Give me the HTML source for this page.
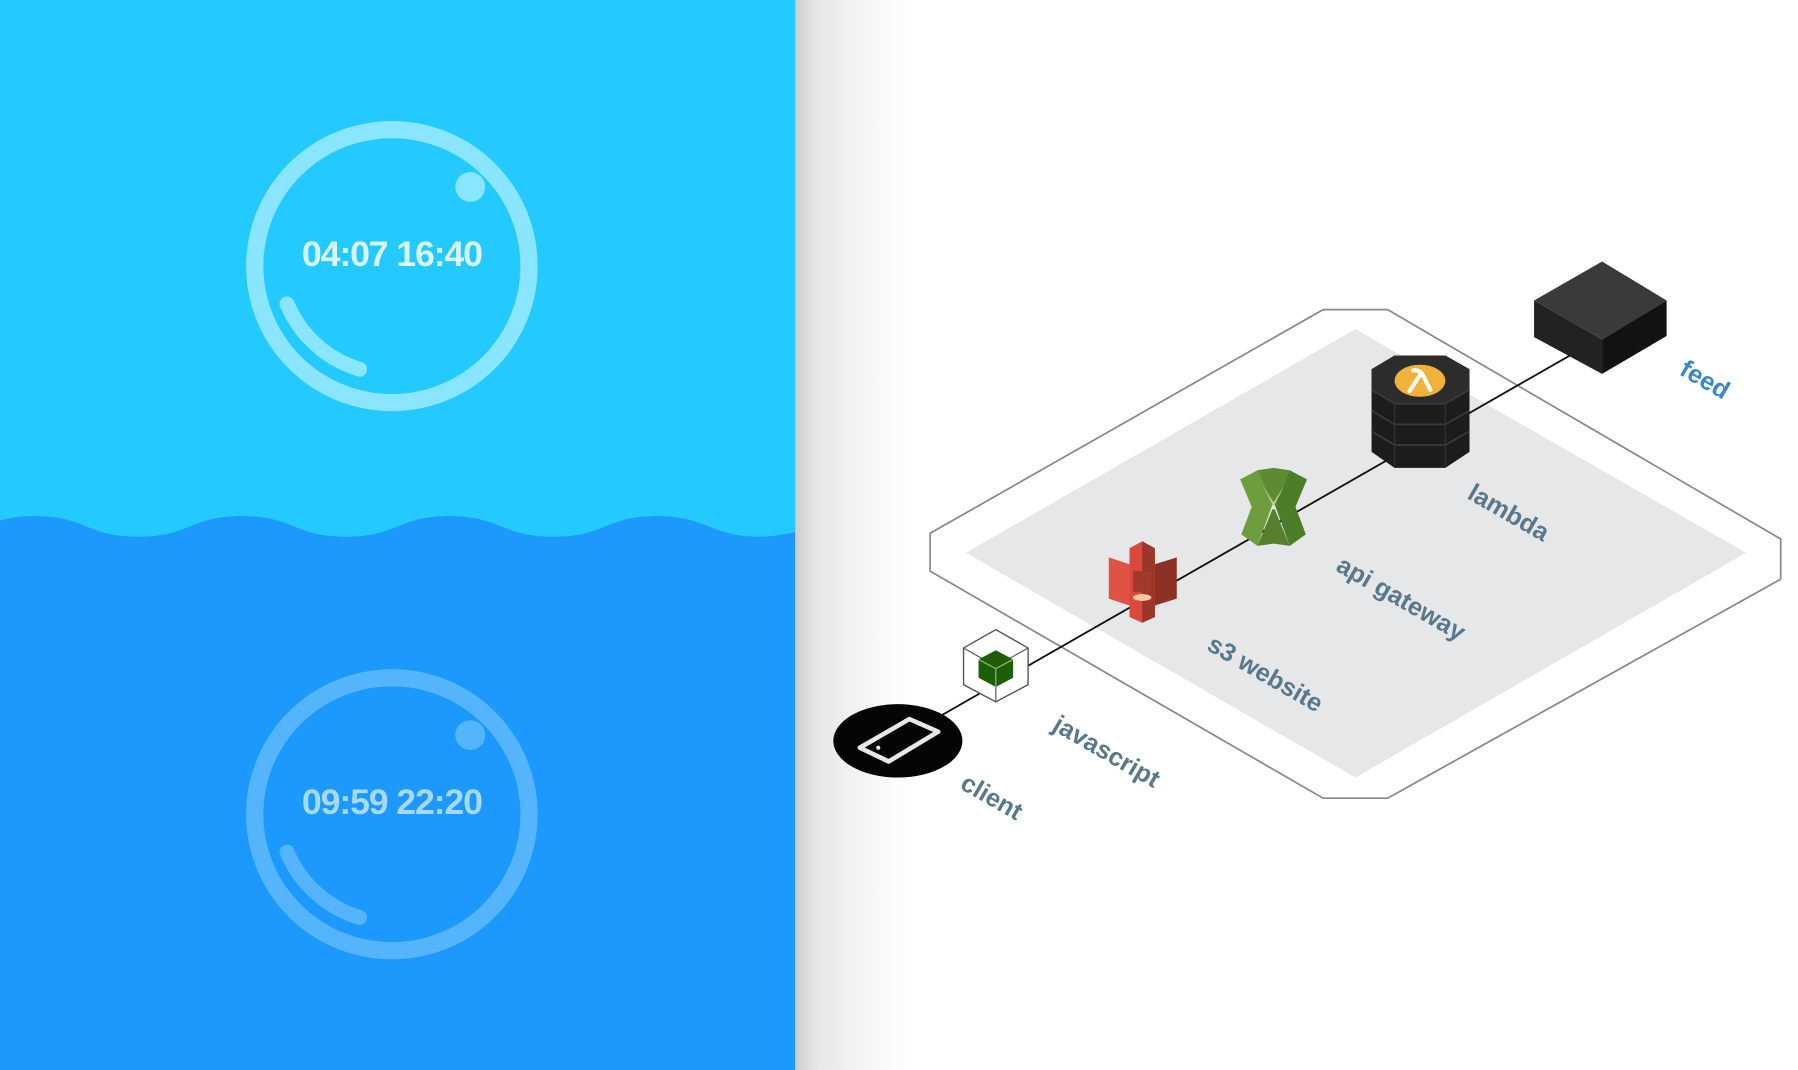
<!DOCTYPE html>
<html><head><meta charset="utf-8"><style>
html,body{margin:0;padding:0;width:1798px;height:1070px;overflow:hidden;background:#fff}
svg{display:block}
</style></head><body>
<svg width="1798" height="1070" viewBox="0 0 1560 933" preserveAspectRatio="none" xmlns="http://www.w3.org/2000/svg">
<defs>
<linearGradient id="sh" x1="0" x2="1" y1="0" y2="0">
<stop offset="0" stop-color="#cdcdcd"/><stop offset="0.2" stop-color="#e8e8e8"/><stop offset="0.6" stop-color="#f5f5f5"/><stop offset="1" stop-color="#ffffff"/>
</linearGradient>
</defs>
<rect x="0" y="0" width="690" height="933" fill="#1d98fc"/>
<path d="M0,0 H690 V464 C680,466 670,468 660,468 C615,468 615,450 570,450 C525,450 525,468 480,468 C435,468 435,450 390,450 C345,450 345,468 300,468 C255,468 255,450 210,450 C165,450 165,468 120,468 C75,468 75,450 30,450 C15,450 8,452 0,454 Z" fill="#23c9ff"/>
<circle cx="340" cy="232" r="119" fill="none" stroke="#8ae5ff" stroke-width="15"/>
<circle cx="408" cy="163" r="13" fill="#8ae5ff"/>
<path d="M249,265 A100,100 0 0 0 312,322" fill="none" stroke="#8ae5ff" stroke-width="13" stroke-linecap="round"/>
<text x="340" y="232" text-anchor="middle" font-family="Liberation Sans, sans-serif" font-size="31" font-weight="bold" fill="#d9f6ff" letter-spacing="-1">04:07 16:40</text>
<circle cx="340" cy="710" r="119" fill="none" stroke="#54b5fd" stroke-width="15"/>
<circle cx="408" cy="641" r="13" fill="#54b5fd"/>
<path d="M249,743 A100,100 0 0 0 312,800" fill="none" stroke="#54b5fd" stroke-width="13" stroke-linecap="round"/>
<text x="340" y="710" text-anchor="middle" font-family="Liberation Sans, sans-serif" font-size="31" font-weight="bold" fill="#a6d9ff" letter-spacing="-1">09:59 22:20</text>
<rect x="690" y="0" width="100" height="933" fill="url(#sh)"/>
<polygon points="1148,270 1204,270 1545,470 1545,505 1204,696 1148,696 807,498 807,465" fill="#fff" stroke="#888" stroke-width="1.5"/>
<polygon points="1176,287 1515,482 1176,678 838,482" fill="#e6e7e9"/>
<line x1="780" y1="645" x2="1362" y2="310" stroke="#111" stroke-width="1.6"/>
<polygon points="1390,228 1446,262 1390,296 1331,262" fill="#3a3a3a"/>
<polygon points="1331,262 1390,296 1390,326 1331,294" fill="#222"/>
<polygon points="1390,296 1446,262 1446,293 1390,326" fill="#121212"/>
<polygon points="1190,322 1210,310 1254,310 1275,322 1275,394 1254,408 1210,408 1190,394" fill="#1c1c1c"/>
<polygon points="1190,322 1210,310 1254,310 1275,322 1275,340 1254,352 1210,352 1190,340" fill="#2c2c2c"/>
<polyline points="1190,358 1210,370 1254,370 1275,358" fill="none" stroke="#3a3a3a" stroke-width="1.5"/>
<polyline points="1190,376 1210,388 1254,388 1275,376" fill="none" stroke="#3a3a3a" stroke-width="1.5"/>
<polyline points="1190,340 1210,352 1254,352 1275,340" fill="none" stroke="#3a3a3a" stroke-width="1.5"/>
<line x1="1210" y1="352" x2="1210" y2="408" stroke="#333"/><line x1="1254" y1="352" x2="1254" y2="408" stroke="#333"/>
<ellipse cx="1232" cy="332" rx="22" ry="14" fill="#f0b23a"/>
<path d="M1223,341 L1232,327 M1226,323 Q1233,322 1236,330 L1241,340" stroke="#fff" stroke-width="3.5" fill="none" stroke-linecap="round"/>
<polygon points="1076,418 1091,410 1104,440 1091,476 1077,466 1086,442" fill="#6d9d3d"/>
<polygon points="1134,418 1119,410 1106,440 1119,476 1133,466 1124,442" fill="#4e7d2a"/>
<polygon points="1091,410 1105,408 1119,410 1106,440 1104,440" fill="#5e8a33"/>
<polygon points="1096,424 1105,442 1114,424 1105,438" fill="#b6d39c"/>
<polygon points="1091,476 1105,474 1119,476 1106,444 1104,444" fill="#567f2e"/>
<polygon points="962,486 980,492 980,528 962,522" fill="#e05244"/>
<polygon points="1021,486 1002,492 1002,528 1021,522" fill="#8c3123"/>
<polygon points="980,478 991,472 1002,478 1002,538 991,543 980,538" fill="#d94a3c"/>
<polygon points="991,472 1002,478 1002,538 991,543" fill="#9b3628"/>
<rect x="983" y="498" width="16" height="18" fill="#a03a2c"/>
<ellipse cx="991" cy="521" rx="8" ry="3" fill="#f6c7a8"/>
<polygon points="864,549 892,565 892,597 864,612 836,597 836,565" fill="#fff" stroke="#555" stroke-width="1.2"/>
<polyline points="836,565 864,581 892,565" fill="none" stroke="#555" stroke-width="1"/>
<line x1="864" y1="581" x2="864" y2="612" stroke="#555" stroke-width="1"/>
<polygon points="864,567 879,575 879,591 864,599 849,591 849,575" fill="#1e5e0b"/>
<polyline points="849,575 864,583 879,575" fill="none" stroke="#8fbf6b" stroke-width="1"/>
<line x1="864" y1="583" x2="864" y2="599" stroke="#8fbf6b" stroke-width="1"/>
<ellipse cx="779" cy="646" rx="56" ry="32" fill="#050505"/>
<polygon points="746,652 789,627 814,638 771,664" fill="none" stroke="#e8e8e8" stroke-width="4" stroke-linejoin="round"/>
<circle cx="762" cy="652" r="1.8" fill="#e8e8e8"/>
<g font-family="Liberation Sans, sans-serif" font-weight="bold" font-size="22" fill="#5a788c">
<text transform="translate(1456,326) rotate(30)" fill="#3b87c9">feed</text>
<text transform="translate(1272,434) rotate(30)">lambda</text>
<text transform="translate(1158,497) rotate(30)">api gateway</text>
<text transform="translate(1046,566) rotate(30)">s3 website</text>
<text transform="translate(912,636) rotate(30)">javascript</text>
<text transform="translate(832,687) rotate(30)">client</text>
</g>
</svg>
</body></html>
